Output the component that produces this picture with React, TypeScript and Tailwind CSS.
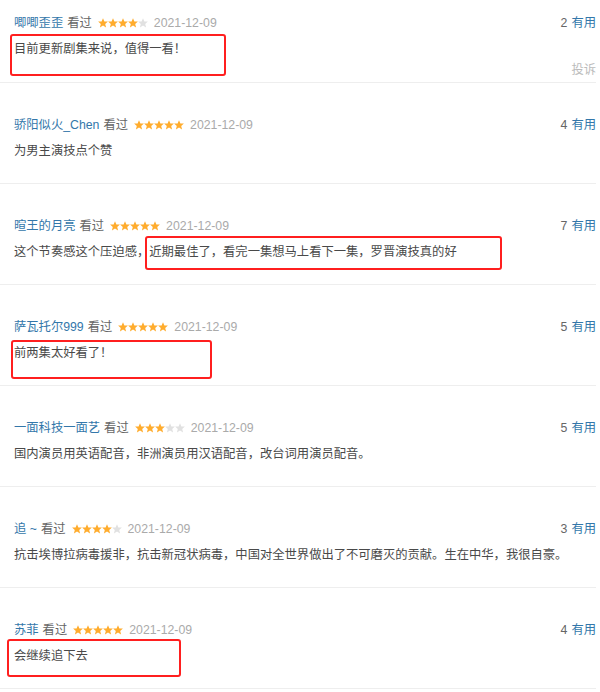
import React from "react";

type Review = {
  name: string;
  stars: number;
  useful: number;
  text: string;
  box?: { left: number; top: number; w: number; h: number };
  report?: boolean;
};

const reviews: Review[] = [
  { name: "唧唧歪歪", stars: 4, useful: 2, text: "目前更新剧集来说，值得一看！", box: { left: 10, top: 34, w: 216, h: 42 }, report: true },
  { name: "骄阳似火_Chen", stars: 5, useful: 4, text: "为男主演技点个赞" },
  { name: "暄王的月亮", stars: 5, useful: 7, text: "这个节奏感这个压迫感，近期最佳了，看完一集想马上看下一集，罗晋演技真的好", box: { left: 145, top: 52, w: 357, h: 34 } },
  { name: "萨瓦托尔999", stars: 5, useful: 5, text: "前两集太好看了！", box: { left: 11, top: 55, w: 201, h: 39 } },
  { name: "一面科技一面艺", stars: 3, useful: 5, text: "国内演员用英语配音，非洲演员用汉语配音，改台词用演员配音。" },
  { name: "追 ~", stars: 4, useful: 3, text: "抗击埃博拉病毒援非，抗击新冠状病毒，中国对全世界做出了不可磨灭的贡献。生在中华，我很自豪。" },
  { name: "苏菲", stars: 5, useful: 4, text: "会继续追下去", box: { left: 7, top: 51, w: 174, h: 38 } },
];

function Star({ on }: { on: boolean }) {
  return (
    <svg width="10" height="10" viewBox="0 0 10 10" className="block">
      <polygon
        points="5,0.2 6.4,3.4 9.9,3.6 7.2,5.9 8.1,9.6 5,7.6 1.9,9.6 2.8,5.9 0.1,3.6 3.6,3.4"
        fill={on ? "#ffac2d" : "#e1e1e1"}
      />
    </svg>
  );
}

export default function App() {
  return (
    <div
      className="w-[596px] bg-white text-[12.3px] text-[#494949]"
      style={{ fontFamily: '"Liberation Sans", "Noto Sans CJK SC", sans-serif' }}
    >
      {reviews.map((r, i) => (
        <div
          key={i}
          className={
            "relative border-b border-[#eeeeee] " +
            (i === 0 ? "pt-[13px] pb-[4px]" : "pt-[32px] pb-[22px]")
          }
        >
          <div className="flex h-[20px] items-center justify-between leading-[20px]">
            <div className="flex items-center pl-[14px]">
              <span className="text-[#3377aa]">{r.name}</span>
              <span className="ml-[4px] text-[#666666]">看过</span>
              <span className="ml-[6px] flex">
                {[0, 1, 2, 3, 4].map((s) => (
                  <Star key={s} on={s < r.stars} />
                ))}
              </span>
              <span className="ml-[6px] text-[#aaaaaa]">2021-12-09</span>
            </div>
            <div>
              <span className="text-[#666666]">{r.useful}</span>
              <span className="ml-[4px] text-[#3377aa]">有用</span>
            </div>
          </div>
          <div className="mt-[6px] h-[20px] pl-[14px] leading-[20px]">{r.text}</div>
          {r.report && (
            <div className="mt-[3px] h-[16px] text-right leading-[16px] text-[#bbbbbb]">投诉</div>
          )}
          {r.box && (
            <div
              className="pointer-events-none absolute rounded-[3px] border-2 border-[#ff1f1f]"
              style={{ left: r.box.left, top: r.box.top, width: r.box.w, height: r.box.h }}
            />
          )}
        </div>
      ))}
    </div>
  );
}
